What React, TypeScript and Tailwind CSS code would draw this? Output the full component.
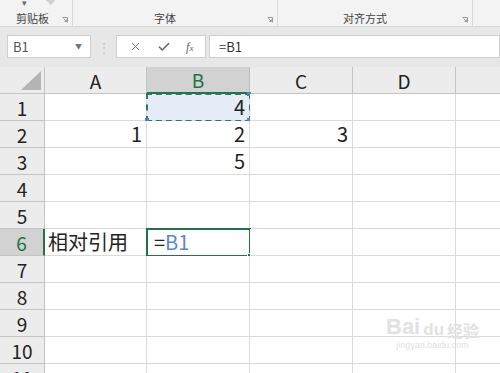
import { X, Check } from "lucide-react";

type Cell = { text?: string; align?: "left" | "right" };

const COLS = ["A", "B", "C", "D", "E"];
const COL_W = ["w-[102px]", "w-[103px]", "w-[103px]", "w-[103px]", "w-[103px]"];

// row number -> cells by column index
const DATA: Record<number, Record<number, Cell>> = {
  1: { 1: { text: "4", align: "right" } },
  2: { 0: { text: "1", align: "right" }, 1: { text: "2", align: "right" }, 2: { text: "3", align: "right" } },
  3: { 1: { text: "5", align: "right" } },
  6: { 0: { text: "相对引用", align: "left" } },
};

const font = "font-['Noto_Sans_CJK_SC','Noto_Sans',sans-serif]";

function Launcher() {
  return (
    <svg width="6" height="6" viewBox="0 0 6 6" className="shrink-0 mb-[1px]">
      <path d="M0.5 0.5 H5.5 V5.5" fill="none" stroke="#9a9a9a" strokeWidth="1" />
      <path d="M1.5 1.5 L4.5 4.5 M2.5 4.5 H4.5 V2.5" fill="none" stroke="#9a9a9a" strokeWidth="1" />
    </svg>
  );
}

function Ribbon() {
  return (
    <div className={`h-[27px] bg-[#f3f3f3] border-b border-[#d6d6d6] flex text-[11px] text-[#444] ${font} relative`}>
      <span className="absolute left-[22px] -top-[4px] text-[9px] text-[#666]">▾</span>
      <span className="absolute left-[46px] -top-[3px] w-[8px] h-[6px] bg-[#d0d0d0] rotate-45" />
      <div className="w-[73px] border-r border-[#d8d8d8] flex items-end justify-between pl-[16px] pr-[4px] pb-[2px]">
        <span className="leading-none">剪贴板</span>
        <Launcher />
      </div>
      <div className="w-[205px] border-r border-[#d8d8d8] flex items-end pb-[2px] pr-[4px]">
        <span className="flex-1 text-center leading-none pr-[10px]">字体</span>
        <Launcher />
      </div>
      <div className="w-[195px] border-r border-[#d8d8d8] flex items-end pb-[2px] pr-[4px]">
        <span className="flex-1 text-center leading-none pr-[10px]">对齐方式</span>
        <Launcher />
      </div>
      <div className="flex-1" />
    </div>
  );
}

function FormulaBar() {
  return (
    <div className={`h-[40px] bg-[#e7e7e7] pt-[8px] pl-[7px] flex items-start ${font}`}>
      <div className="w-[84px] h-[23px] bg-white border border-[#cfcfcf] flex items-center justify-between pl-[5px] pr-[8px]">
        <span className="text-[13px] text-[#555] leading-none">B1</span>
        <span className="text-[7px] text-[#777] leading-none">▼</span>
      </div>
      <div className="w-[25px] h-[23px] flex items-center justify-center text-[#c4c4c4] text-[12px]">⋮</div>
      <div className="w-[90px] h-[23px] bg-white border border-[#cfcfcf] flex items-center justify-around px-[4px] text-[#666]">
        <X size={13} strokeWidth={1.6} />
        <Check size={14} strokeWidth={2.6} />
        <span className="font-['Liberation_Serif',serif] italic text-[12px] leading-none">
          f<span className="text-[9px]">x</span>
        </span>
      </div>
      <div className="ml-[3px] flex-1 h-[23px] bg-white border border-[#cfcfcf] flex items-center pl-[9px]">
        <span className="text-[13px] text-[#333] leading-none">=B1</span>
      </div>
    </div>
  );
}

function HeaderRow() {
  return (
    <div className="flex h-[27px]">
      <div className="w-[45px] shrink-0 bg-[#ececec] border-r border-b border-[#c4c4c4] flex items-end justify-end pr-[3px] pb-[3px]">
        <svg width="20" height="19" viewBox="0 0 20 19">
          <polygon points="20,0 20,19 0,19" fill="#b4b4b4" />
        </svg>
      </div>
      {COLS.map((c, i) => {
        const sel = c === "B";
        return (
          <div
            key={c}
            className={`${COL_W[i]} shrink-0 flex items-center justify-center text-[19px] leading-none border-r ${
              sel
                ? "bg-[#d2d2d2] text-[#217346] border-b-2 border-b-[#217346] border-r-[#bdbdbd]"
                : "bg-[#ececec] text-[#222] border-b border-[#c4c4c4]"
            }`}
          >
            {c}
          </div>
        );
      })}
    </div>
  );
}

function Row({ n }: { n: number }) {
  const sel = n === 6;
  const cells = DATA[n] || {};
  return (
    <div className="flex h-[27px]">
      <div
        className={`w-[45px] shrink-0 flex items-center justify-center text-[19px] leading-none border-b border-[#c4c4c4] ${
          sel
            ? "bg-[#d2d2d2] text-[#217346] border-r-2 border-r-[#217346]"
            : "bg-[#ececec] text-[#222] border-r"
        }`}
      >
        {n}
      </div>
      {COLS.map((c, i) => {
        const cell = cells[i];
        const isRef = n === 1 && c === "B";
        const isActive = n === 6 && c === "B";
        return (
          <div
            key={c}
            className={`${COL_W[i]} shrink-0 relative flex items-center border-r border-b border-[#dadada] text-[20px] leading-none text-[#222] ${
              cell?.align === "right" ? "justify-end pr-[4px]" : "justify-start pl-[3px]"
            } ${isRef ? "bg-[#e6edf8]" : "bg-white"}`}
          >
            {cell?.text}
            {isRef && (
              <>
                <div className="absolute -left-[1px] -top-[1px] w-[105px] h-[29px] border-2 border-dashed border-[#2d7a5a]" />
                <div className="absolute -left-[2px] -bottom-[2px] w-[4px] h-[4px] bg-[#4a7fd4]" />
                <div className="absolute -right-[2px] -bottom-[2px] w-[4px] h-[4px] bg-[#4a7fd4]" />
                <div className="absolute -right-[2px] -top-[2px] w-[4px] h-[4px] bg-[#4a7fd4]" />
              </>
            )}
            {isActive && (
              <>
                <div className="absolute -left-[1px] -top-[1px] w-[105px] h-[29px] border-2 border-[#217346]" />
                <div className="absolute -right-[3px] -bottom-[3px] w-[5px] h-[5px] bg-[#217346] border border-white" />
                <span className="pl-[4px]">
                  =<span className="text-[#5a86d0]">B1</span>
                </span>
              </>
            )}
          </div>
        );
      })}
    </div>
  );
}

export default function App() {
  const rows = Array.from({ length: 11 }, (_, i) => i + 1);
  return (
    <div className={`w-[500px] h-[373px] overflow-hidden bg-white relative ${font}`}>
      <Ribbon />
      <FormulaBar />
      <HeaderRow />
      {rows.map((n) => (
        <Row key={n} n={n} />
      ))}

      {/* faint watermark */}
      <div className="absolute left-[386px] top-[316px] flex flex-col items-center text-[#e2e2e2] pointer-events-none">
        <div className="flex items-end gap-[3px] leading-none">
          <span className="text-[22px] font-bold font-['Liberation_Sans',sans-serif]">Bai</span>
          <span className="text-[17px] font-bold font-['Liberation_Sans',sans-serif]">du</span>
          <span className="text-[16px] font-bold">经验</span>
        </div>
        <span className="text-[9px] leading-none mt-[3px] font-['Liberation_Sans',sans-serif]">jingyan.baidu.com</span>
      </div>
    </div>
  );
}
